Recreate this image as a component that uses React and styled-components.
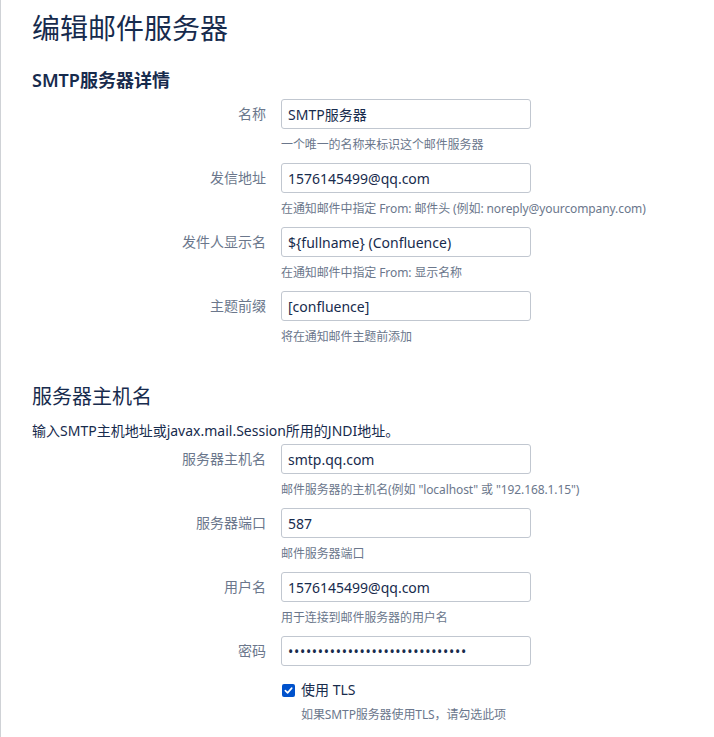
import React from "react";
import styled, { createGlobalStyle } from "styled-components";

const GlobalStyle = createGlobalStyle`
  body {
    margin: 0;
    background: #ffffff;
    font-family: "Noto Sans", "Noto Sans CJK SC", sans-serif;
    color: #172b4d;
  }
`;

const Page = styled.div`
  min-height: 737px;
  box-sizing: border-box;
  border-left: 1px solid #cfd2d6;
  padding: 12px 0 0 31px;
`;

const Title = styled.h1`
  margin: 0;
  font-size: 28px;
  line-height: 32px;
  font-weight: 400;
  color: #172b4d;
`;

const SectionTitle = styled.h2`
  margin: ${(props) => props.$top}px 0 0;
  font-size: ${(props) => props.$size}px;
  line-height: ${(props) => props.$lh}px;
  font-weight: ${(props) => props.$weight};
  color: #172b4d;
`;

const Intro = styled.p`
  margin: 10px 0 0;
  font-size: 14px;
  line-height: 20px;
  color: #172b4d;
`;

const Form = styled.div`
  display: grid;
  grid-template-columns: 234px 250px;
  column-gap: 15px;
  margin-top: ${(props) => props.$top}px;
`;

const Label = styled.label`
  grid-column: 1;
  text-align: right;
  font-size: 14px;
  line-height: 30px;
  color: #6b778c;
`;

const Field = styled.div`
  grid-column: 2;
  display: flex;
  flex-direction: column;
  margin-bottom: ${(props) => (props.$last ? 0 : 10)}px;
`;

const Input = styled.input`
  box-sizing: border-box;
  width: 250px;
  height: 30px;
  margin: 0;
  padding: 0 6px;
  border: 1px solid #c1c7d0;
  border-radius: 3px;
  background: #fff;
  font-family: "Noto Sans", "Noto Sans CJK SC", sans-serif;
  font-size: 14px;
  color: #172b4d;
  outline: none;
  letter-spacing: ${(props) => (props.type === "password" ? "0.7px" : "0")};
`;

const Desc = styled.div`
  margin-top: 8px;
  font-size: 12px;
  line-height: 16px;
  color: #6b778c;
  white-space: nowrap;
  letter-spacing: -0.1px;
`;

const CheckRow = styled.div`
  grid-column: 2;
  display: flex;
  align-items: center;
  gap: 6px;
  margin-top: 14px;
  padding-left: 1px;
  font-size: 14px;
  line-height: 20px;
  color: #172b4d;
`;

const Box = styled.span`
  width: 13px;
  height: 13px;
  border-radius: 2px;
  background: #0052cc;
  display: inline-flex;
  align-items: center;
  justify-content: center;
`;

const CheckDesc = styled(Desc)`
  grid-column: 2;
  margin-top: 7px;
  padding-left: 20px;
`;

const smtpFields = [
  { label: "名称", value: "SMTP服务器", desc: "一个唯一的名称来标识这个邮件服务器" },
  {
    label: "发信地址",
    value: "1576145499@qq.com",
    desc: "在通知邮件中指定 From: 邮件头 (例如: noreply@yourcompany.com)",
  },
  { label: "发件人显示名", value: "${fullname} (Confluence)", desc: "在通知邮件中指定 From: 显示名称" },
  { label: "主题前缀", value: "[confluence]", desc: "将在通知邮件主题前添加" },
];

const hostFields = [
  {
    label: "服务器主机名",
    value: "smtp.qq.com",
    desc: '邮件服务器的主机名(例如 "localhost" 或 "192.168.1.15")',
  },
  { label: "服务器端口", value: "587", desc: "邮件服务器端口" },
  { label: "用户名", value: "1576145499@qq.com", desc: "用于连接到邮件服务器的用户名" },
  { label: "密码", value: "******************************", type: "password" },
];

const renderFields = (fields) =>
  fields.map((f) => (
    <React.Fragment key={f.label}>
      <Label>{f.label}</Label>
      <Field $last={!f.desc}>
        <Input type={f.type || "text"} defaultValue={f.value} readOnly />
        {f.desc && <Desc>{f.desc}</Desc>}
      </Field>
    </React.Fragment>
  ));

const App = () => {
  return (
    <Page>
      <GlobalStyle />
      <Title>编辑邮件服务器</Title>
      <SectionTitle $top={24} $size={18} $lh={24} $weight={600}>
        SMTP服务器详情
      </SectionTitle>
      <Form $top={7}>{renderFields(smtpFields)}</Form>

      <SectionTitle $top={28} $size={20} $lh={28} $weight={400}>
        服务器主机名
      </SectionTitle>
      <Intro>输入SMTP主机地址或javax.mail.Session所用的JNDI地址。</Intro>
      <Form $top={3}>
        {renderFields(hostFields)}
        <CheckRow>
          <Box>
            <svg width="9" height="9" viewBox="0 0 10 10">
              <path
                d="M1.5 5.2 L4 7.6 L8.6 2.4"
                fill="none"
                stroke="#fff"
                strokeWidth="1.8"
                strokeLinecap="round"
                strokeLinejoin="round"
              />
            </svg>
          </Box>
          使用 TLS
        </CheckRow>
        <CheckDesc>如果SMTP服务器使用TLS，请勾选此项</CheckDesc>
      </Form>
    </Page>
  );
};

export default App;
